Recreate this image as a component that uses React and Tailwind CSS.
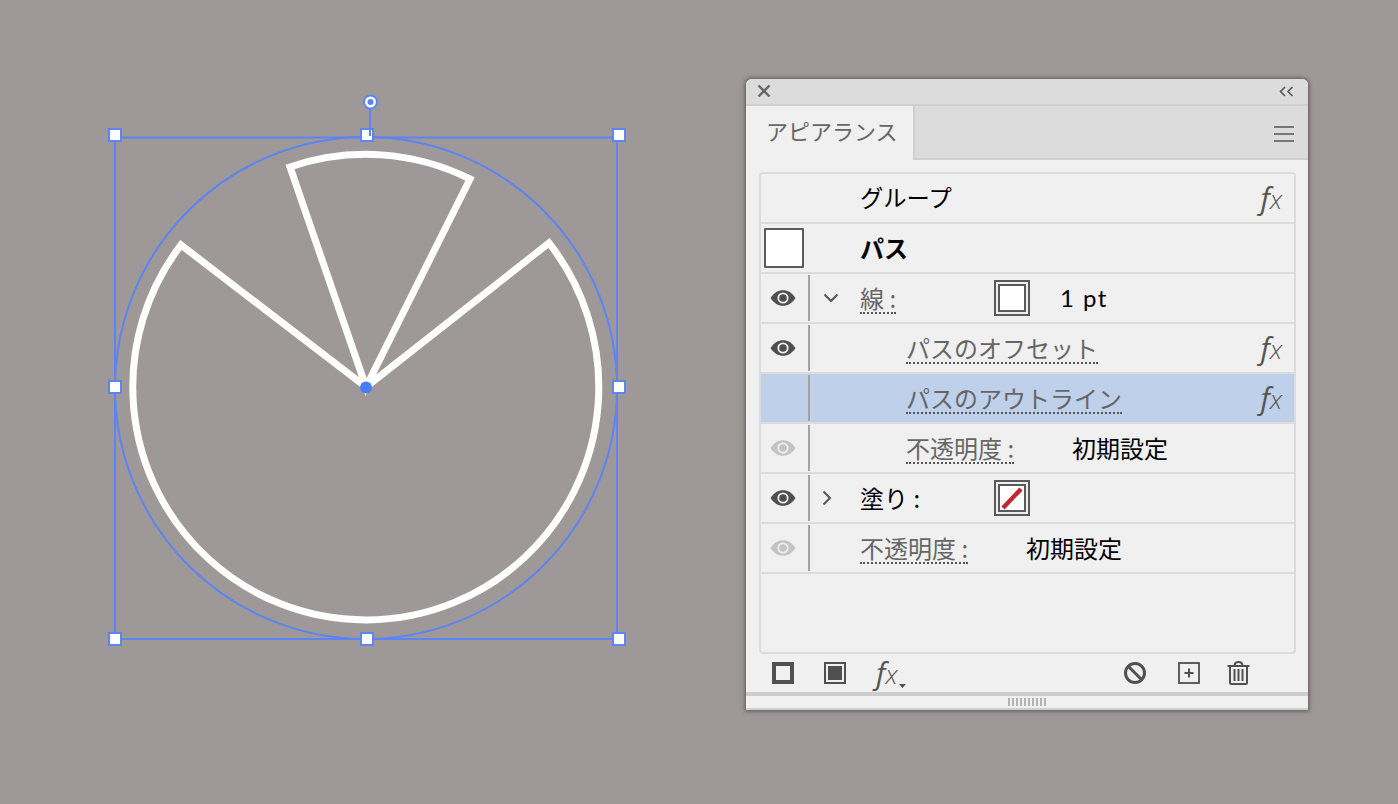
import React from "react";

const Eye = ({ dim }) => (
  <svg width="26" height="18" viewBox="0 0 26 18" className="block">
    <path d="M0.5 9C4 3.6 8.2 1.2 13 1.2S22 3.6 25.5 9C22 14.4 17.8 16.8 13 16.8S4 14.4 0.5 9Z" fill={dim ? "#c4c4c4" : "#4f4f4f"} />
    <circle cx="13" cy="9" r="5.6" fill="#f0f0f0" />
    <circle cx="13" cy="9" r="3.8" fill={dim ? "#c4c4c4" : "#4f4f4f"} />
  </svg>
);

const Fx = ({ small }) => (
  <span className={`font-['Open_Sans',sans-serif] italic text-[#555555] leading-none ${small ? "" : "ml-auto mr-[12px]"}`}>
    <span className="text-[30px] font-normal">f</span>
    <span className="text-[26px] font-light">x</span>
  </span>
);

const Swatch = ({ none }) => (
  <div className="w-[36px] h-[36px] border-2 border-[#5a5a5a] p-[2px] shrink-0">
    <div className="w-full h-full border-2 border-[#5a5a5a] bg-white">
      {none && (
        <svg viewBox="0 0 24 24" className="block w-full h-full">
          <path d="M3 22L21 3" stroke="#bf2734" strokeWidth="4.4" />
        </svg>
      )}
    </div>
  </div>
);

const Dotted = ({ children }) => (
  <span className="text-[#666666] border-b-2 border-dotted border-[#555555] leading-[27px] inline-block h-[30px] mt-[2px]">{children}</span>
);

const Row = ({ eye, chevron, selected, indent, children, swatch }) => (
  <div className={`flex items-center h-[50px] border-b-2 border-[#dcdcdc] shrink-0 ${selected ? "bg-[#bed0ea]" : ""}`}>
    <div className="w-[47px] h-full flex items-center justify-center shrink-0">
      {eye && (
        <div className="mr-[3px]">
          <Eye dim={eye === "dim"} />
        </div>
      )}
      {swatch && <div className="w-[40px] h-[40px] border-2 border-[#5a5a5a] bg-white rounded-[1px] mr-[1px]" />}
    </div>
    {swatch ? <div className="w-[2px]" /> : eye || selected ? <div className="w-[2px] h-[46px] bg-[#a3a3a3]" /> : <div className="w-[2px]" />}
    <div className="w-[50px] flex items-center justify-center shrink-0 pr-[9px]">
      {chevron === "down" && (
        <svg width="16" height="10" viewBox="0 0 16 10"><path d="M1.5 1.5L8 8L14.5 1.5" fill="none" stroke="#555555" strokeWidth="2" /></svg>
      )}
      {chevron === "right" && (
        <svg width="10" height="16" viewBox="0 0 10 16" className="mr-[7px]"><path d="M1.5 1.5L8 8L1.5 14.5" fill="none" stroke="#555555" strokeWidth="2" /></svg>
      )}
    </div>
    {indent && <div className="w-[46px] shrink-0" />}
    {children}
  </div>
);

const handles = [
  [115, 135], [367, 135], [619, 135],
  [115, 387], [619, 387],
  [115, 639], [367, 639], [619, 639],
];
const BLUE = "#5c84f2";

export default function App() {
  return (
    <div className="w-[1398px] h-[804px] overflow-hidden flex items-start bg-[#9f9899] font-['Noto_Sans_CJK_JP','Noto_Sans',sans-serif] text-[24px] text-black">
      <svg width="746" height="804" viewBox="0 0 746 804" className="block shrink-0">
        <path d="M115 137.5H617V639H115Z" fill="none" stroke={BLUE} strokeWidth="2" />
        <circle cx="366" cy="388" r="251" fill="none" stroke={BLUE} strokeWidth="2" />
        <path d="M366 387L181 245A233 233 0 1 0 549 243Z" fill="none" stroke="#ffffff" strokeWidth="7" strokeLinejoin="miter" />
        <path d="M366 387L290 167A233 233 0 0 1 470 179Z" fill="none" stroke="#ffffff" strokeWidth="7" strokeLinejoin="miter" />
        <path d="M370 108V128" stroke={BLUE} strokeWidth="2" />
        {handles.map(([x, y]) => (
          <rect key={`${x}-${y}`} x={x - 6} y={y - 6} width="12" height="12" fill="#ffffff" stroke={BLUE} strokeWidth="2" />
        ))}
        <path d="M370 128V136" stroke={BLUE} strokeWidth="2" />
        <circle cx="370.5" cy="102" r="6.5" fill="#ffffff" stroke={BLUE} strokeWidth="2" />
        <circle cx="370.5" cy="102" r="3" fill={BLUE} />
        <circle cx="366" cy="387.5" r="6" fill="#4a7df5" />
      </svg>

      <div className="w-[562px] h-[631px] mt-[78.5px] shrink-0 flex flex-col bg-[#f0f0f0] rounded-t-[6px] shadow-[0_0_4px_1px_rgba(40,40,40,0.6)] overflow-hidden">
        <div className="h-[27px] shrink-0 flex items-center justify-between bg-[#dcdcdc] border-b-2 border-[#cfcfcf] pl-[11px] pr-[14px]">
          <svg width="14" height="14" viewBox="0 0 14 14"><path d="M1.5 1.5L12.5 12.5M12.5 1.5L1.5 12.5" stroke="#666666" strokeWidth="2.4" /></svg>
          <svg width="15" height="11" viewBox="0 0 15 11"><path d="M6 1L1.5 5.5L6 10M13.5 1L9 5.5L13.5 10" fill="none" stroke="#555555" strokeWidth="1.6" /></svg>
        </div>

        <div className="h-[54px] shrink-0 flex bg-[#dcdcdc] border-b-2 border-[#cfcfcf]">
          <div className="w-[169px] h-[54px] bg-[#f0f0f0] border-r-2 border-[#cfcfcf] flex items-center pl-[20px] pb-[4px] text-[22px] text-[#666666]">アピアランス</div>
          <div className="ml-auto mr-[14px] mt-[20px] flex flex-col gap-[5px]">
            <div className="w-[20px] h-[2px] bg-[#777777]" />
            <div className="w-[20px] h-[2px] bg-[#777777]" />
            <div className="w-[20px] h-[2px] bg-[#777777]" />
          </div>
        </div>

        <div className="ml-[13px] mr-[12px] mt-[12px] h-[482px] shrink-0 flex flex-col border-2 border-[#dcdcdc] rounded-[4px]">
          <Row>
            <span className="text-[23.3px]">グループ</span>
            <Fx />
          </Row>
          <Row swatch>
            <span className="font-bold">パス</span>
          </Row>
          <Row eye="on" chevron="down">
            <div className="w-[134px] shrink-0"><Dotted>線 :</Dotted></div>
            <Swatch />
            <span className="ml-[30px] font-['Lato',sans-serif] text-[24px] tracking-[1.5px]">1 pt</span>
          </Row>
          <Row eye="on" indent>
            <Dotted>パスのオフセット</Dotted>
            <Fx />
          </Row>
          <Row selected indent>
            <Dotted>パスのアウトライン</Dotted>
            <Fx />
          </Row>
          <Row eye="dim" indent>
            <div className="w-[166px] shrink-0"><Dotted>不透明度 :</Dotted></div>
            <span>初期設定</span>
          </Row>
          <Row eye="on" chevron="right">
            <div className="w-[134px] shrink-0">塗り :</div>
            <Swatch none />
          </Row>
          <Row eye="dim">
            <div className="w-[166px] shrink-0"><Dotted>不透明度 :</Dotted></div>
            <span>初期設定</span>
          </Row>
        </div>

        <div className="h-[38px] shrink-0 flex items-center pl-[26px]">
          <div className="w-[22px] h-[22px] border-[4px] border-[#505050] bg-[#f0f0f0] shrink-0" />
          <div className="w-[22px] h-[22px] border-2 border-[#505050] p-[2px] ml-[30px] shrink-0">
            <div className="w-full h-full bg-[#505050]" />
          </div>
          <div className="ml-[30px] relative w-[30px] flex">
            <Fx small />
            <svg width="7" height="4" viewBox="0 0 7 4" className="absolute right-0 bottom-[0px]"><path d="M0 0H7L3.5 4Z" fill="#505050" /></svg>
          </div>
          <svg width="24" height="24" viewBox="0 0 24 24" className="ml-[217px] shrink-0">
            <circle cx="12" cy="12" r="9.5" fill="none" stroke="#505050" strokeWidth="3" />
            <path d="M5.5 5.5L18.5 18.5" stroke="#505050" strokeWidth="3" />
          </svg>
          <svg width="22" height="22" viewBox="0 0 22 22" className="ml-[31px] shrink-0">
            <rect x="1" y="1" width="20" height="20" fill="none" stroke="#505050" strokeWidth="1.8" />
            <path d="M11 6.5V15.5M6.5 11H15.5" stroke="#505050" strokeWidth="2" />
          </svg>
          <svg width="23" height="24" viewBox="0 0 23 24" className="ml-[27px] shrink-0">
            <path d="M0.5 5H22.5M7.5 5C7.5 2.5 9 1 11.5 1S15.5 2.5 15.5 5" fill="none" stroke="#505050" strokeWidth="2" />
            <path d="M3 5V21.5C3 22.5 3.7 23 4.5 23H18.5C19.3 23 20 22.5 20 21.5V5" fill="none" stroke="#505050" strokeWidth="2" />
            <path d="M7.5 8V20M11.5 8V20M15.5 8V20" stroke="#505050" strokeWidth="2" />
          </svg>
        </div>

        <div className="h-[4px] shrink-0 bg-[#cdcdcd]" />
        <div className="flex-1 flex items-center justify-center">
          <div className="w-[38px] h-[8px] bg-[repeating-linear-gradient(90deg,#b4b4b4_0,#b4b4b4_2px,transparent_2px,transparent_4px)]" />
        </div>
        <div className="h-[2px] shrink-0 bg-[#cfcfcf]" />
      </div>
    </div>
  );
}
